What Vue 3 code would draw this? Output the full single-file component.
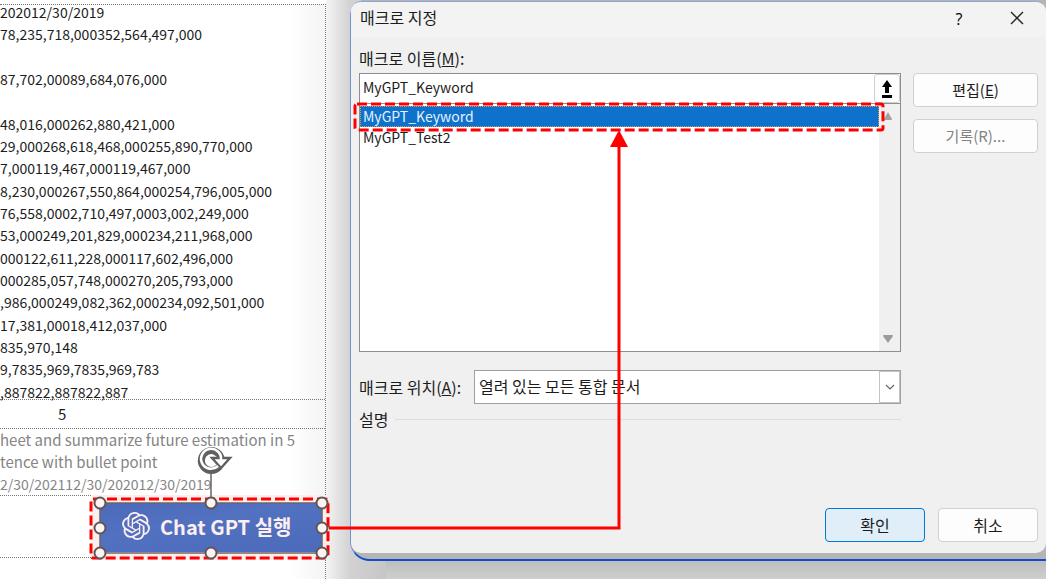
<script setup>
import { ref } from 'vue'

const figures = [
  '202012/30/2019',
  '78,235,718,000352,564,497,000',
  '',
  '87,702,00089,684,076,000',
  '',
  '48,016,000262,880,421,000',
  '29,000268,618,468,000255,890,770,000',
  '7,000119,467,000119,467,000',
  '8,230,000267,550,864,000254,796,005,000',
  '76,558,0002,710,497,0003,002,249,000',
  '53,000249,201,829,000234,211,968,000',
  '000122,611,228,000117,602,496,000',
  '000285,057,748,000270,205,793,000',
  ',986,000249,082,362,000234,092,501,000',
  '17,381,00018,412,037,000',
  '835,970,148',
  '9,7835,969,7835,969,783',
  ',887822,887822,887'
]
const macros = ['MyGPT_Keyword', 'MyGPT_Test2']
const selected = ref('MyGPT_Keyword')
const handles = [
  [100, 503], [211, 503], [322, 503],
  [100, 528], [322, 528],
  [100, 553], [211, 553], [322, 553]
]
</script>

<template>
  <div class="screen">
    <section class="sheet">
      <div class="cell figures">
        <div class="lines">
          <div v-for="(line, i) in figures" :key="i">{{ line }}</div>
        </div>
      </div>
      <div class="cell count">5</div>
      <div class="cell prompt">
        <div>heet and summarize future estimation in 5</div>
        <div>tence with bullet point</div>
        <div class="dates">2/30/202112/30/202012/30/2019</div>
      </div>
      <div class="cell launch">
        <button class="chat" type="button">
          <svg width="28" height="28" viewBox="0 0 24 24" aria-hidden="true">
            <path fill="#fdeef0" d="M22.2819 9.8211a5.9847 5.9847 0 0 0-.5157-4.9108 6.0462 6.0462 0 0 0-6.5098-2.9A6.0651 6.0651 0 0 0 4.9807 4.1818a5.9847 5.9847 0 0 0-3.9977 2.9 6.0462 6.0462 0 0 0 .7427 7.0966 5.98 5.98 0 0 0 .511 4.9107 6.051 6.051 0 0 0 6.5146 2.9001A5.9847 5.9847 0 0 0 13.2599 24a6.0557 6.0557 0 0 0 5.7718-4.2058 5.9894 5.9894 0 0 0 3.9977-2.9001 6.0557 6.0557 0 0 0-.7475-7.0729zm-9.022 12.6081a4.4755 4.4755 0 0 1-2.8764-1.0408l.1419-.0804 4.7783-2.7582a.7948.7948 0 0 0 .3927-.6813v-6.7369l2.02 1.1686a.071.071 0 0 1 .038.052v5.5826a4.504 4.504 0 0 1-4.4945 4.4944zm-9.6607-4.1254a4.4708 4.4708 0 0 1-.5346-3.0137l.142.0852 4.783 2.7582a.7712.7712 0 0 0 .7806 0l5.8428-3.3685v2.3324a.0804.0804 0 0 1-.0332.0615L9.74 19.9502a4.4992 4.4992 0 0 1-6.1408-1.6464zM2.3408 7.8956a4.485 4.485 0 0 1 2.3655-1.9728V11.6a.7664.7664 0 0 0 .3879.6765l5.8144 3.3543-2.0201 1.1685a.0757.0757 0 0 1-.071 0l-4.8303-2.7865A4.504 4.504 0 0 1 2.3408 7.872zm16.5963 3.8558L13.1038 8.364 15.1192 7.2a.0757.0757 0 0 1 .071 0l4.8303 2.7913a4.4944 4.4944 0 0 1-.6765 8.1042v-5.6772a.79.79 0 0 0-.407-.667zm2.0107-3.0231l-.142-.0852-4.7735-2.7818a.7759.7759 0 0 0-.7854 0L9.409 9.2297V6.8974a.0662.0662 0 0 1 .0284-.0615l4.8303-2.7866a4.4992 4.4992 0 0 1 6.6802 4.66zM8.3065 12.863l-2.02-1.1638a.0804.0804 0 0 1-.038-.0567V6.0742a4.4992 4.4992 0 0 1 7.3757-3.4537l-.142.0805L8.704 5.459a.7948.7948 0 0 0-.3927.6813zm1.0976-2.3654l2.602-1.4998 2.6069 1.4998v2.9994l-2.5974 1.4997-2.6067-1.4997Z" />
          </svg>
          <span>Chat GPT 실행</span>
        </button>
      </div>
    </section>

    <div class="backdrop">
      <div class="host">
        <form class="dialog" @submit.prevent>
          <header class="titlebar">
            <span class="title">매크로 지정</span>
            <button type="button" class="caption" aria-label="도움말">?</button>
            <button type="button" class="caption" aria-label="닫기">
              <svg width="14" height="14" viewBox="0 0 14 14"><path d="M1 1 13 13M13 1 1 13" stroke="#222" stroke-width="1.4" /></svg>
            </button>
          </header>

          <div class="body">
            <label class="name-label" for="macro-name">매크로 이름(<u>M</u>):</label>
            <div class="columns">
              <div class="fields">
                <div class="picker">
                  <div class="name-row">
                    <input id="macro-name" v-model="selected" type="text" spellcheck="false" />
                    <button type="button" class="collapse" aria-label="접기">
                      <svg width="12" height="20" viewBox="0 0 12 20"><path d="M6 1 11 8H8V14H4V8H1ZM1 16H11V19H1Z" fill="#000" /></svg>
                    </button>
                  </div>
                  <div class="list-row">
                    <select v-model="selected" size="3" aria-label="매크로 목록">
                      <option v-for="m in macros" :key="m" :value="m">{{ m }}</option>
                    </select>
                    <div class="track">
                      <svg width="10" height="8" viewBox="0 0 10 8"><path d="M5 0 9 7Q9 8 8 8H2Q1 8 1 7Z" fill="#a3a3a3" /></svg>
                      <svg width="10" height="8" viewBox="0 0 10 8"><path d="M5 8 0 1Q0 0 1 0H9Q10 0 10 1Z" fill="#9b9b9b" /></svg>
                    </div>
                  </div>
                </div>
                <div class="place">
                  <label for="macro-place">매크로 위치(<u>A</u>):</label>
                  <div class="combo">
                    <select id="macro-place"><option>열려 있는 모든 통합 문서</option></select>
                    <span class="drop"><svg width="10" height="6" viewBox="0 0 10 6"><path d="M1 1 5 5 9 1" fill="none" stroke="#666" stroke-width="1.2" /></svg></span>
                  </div>
                </div>
                <div class="desc"><span>설명</span><i></i></div>
              </div>
              <div class="side">
                <button type="button">편집(<u>E</u>)</button>
                <button type="button" disabled>기록(R)...</button>
              </div>
            </div>
            <footer class="actions">
              <button type="submit" class="ok">확인</button>
              <button type="button">취소</button>
            </footer>
          </div>
        </form>
      </div>
    </div>

    <svg class="marks" width="1046" height="579" viewBox="0 0 1046 579" aria-hidden="true">
      <path d="M211 471V503M100 503H322V553H100Z" fill="none" stroke="#6b6666" stroke-width="1.5" />
      <g fill="none">
        <path d="M219 467A10 10 0 1 1 221 458" stroke="#606060" stroke-width="7" />
        <path d="M212 458H230L221 468Z" fill="#fff" stroke="#606060" stroke-width="2.4" />
        <path d="M218 466A10 10 0 1 1 221 460" stroke="#fff" stroke-width="2.6" />
      </g>
      <g fill="none" stroke="#fe0000" stroke-width="3">
        <rect x="355" y="104" width="528" height="26" rx="2" stroke-dasharray="10 4" />
        <rect x="91" y="499" width="237" height="59" rx="2" stroke-dasharray="10 4" />
        <path d="M329 528H619V144" />
        <path d="M619 130 628 147H610Z" fill="#fe0000" stroke="none" />
      </g>
      <circle v-for="(h, i) in handles" :key="i" :cx="h[0]" :cy="h[1]" r="5.5" fill="#fdf3f3" stroke="#5f5654" stroke-width="2" />
    </svg>
  </div>
</template>

<style>
body { margin: 0; overflow: hidden; }
</style>

<style scoped>
* { box-sizing: border-box; }
.screen {
  position: relative;
  display: flex;
  min-height: 100vh;
  background: #fff;
  color: #1c1c1c;
  font: 14px/22px "Noto Sans CJK KR", sans-serif;
}
.sheet {
  flex: 0 0 326px;
  margin-top: 4px;
  border-top: 1px dotted #777;
  border-right: 1px dotted #777;
  white-space: nowrap;
  background: linear-gradient(90deg, #fff 290px, #f4f4f4);
}
.cell { border-bottom: 1px dotted #777; }
.figures { display: flex; align-items: center; height: 395px; }
.lines {
  display: grid;
  flex: none;
  grid-template-rows: repeat(18, 1fr);
  height: 402px;
}
.count { height: 29px; padding-left: 58px; font-size: 15px; line-height: 27px; }
.prompt { height: 67px; color: #858585; font-size: 15px; }
.dates { font-size: 14px; }
.launch {
  display: flex;
  justify-content: flex-end;
  height: 62px;
  padding: 7px 3px 5px 0;
}
.chat {
  display: flex;
  align-items: center;
  gap: 10px;
  width: 222px;
  padding: 0 0 3px 22px;
  border: 0;
  background: linear-gradient(170deg, #4b6aba, #5271c1 40%, #4b6aba);
  box-shadow: 0 0 0 8px #fdeeee;
  color: #fdeef0;
  font: bold 20px "Noto Sans CJK KR", sans-serif;
}
.backdrop {
  flex: 1;
  min-width: 0;
  padding: 0 0 18px 24px;
  background:
    linear-gradient(#bdbdbd, #cfcfcf) right bottom / calc(100% - 60px) 18px no-repeat,
    linear-gradient(90deg, #f4f4f4, #d2d2d2 24px, #c6c6c6 60px);
}
.host {
  padding: 1px 0 6px;
  border-bottom: 2px solid #0a50c8;
  border-left: 1px solid #6f94d4;
  border-radius: 16px 0 0 20px;
  background: #b5b5b5;
}
.dialog {
  display: flex;
  flex-direction: column;
  min-height: 552px;
  overflow: hidden;
  border-top: 1px solid #8ea6d2;
  border-radius: 10px;
  background: #f0f0f0;
}
.titlebar {
  display: flex;
  align-items: center;
  height: 35px;
  padding: 0 12px 2px 9px;
  background: #f3f3f3;
}
.title { flex: 1; font-size: 16px; line-height: 18px; padding-bottom: 3px; }
.caption {
  width: 34px;
  margin-left: 24px;
  padding: 0;
  border: 0;
  background: none;
  font: 16px "Open Sans", sans-serif;
}
.body {
  display: flex;
  flex: 1;
  flex-direction: column;
  padding: 10px 8px 11px;
  font-size: 16px;
}
.name-label { margin-bottom: 4px; }
.columns { display: flex; gap: 12px; }
.fields { flex: 1; min-width: 0; }
.picker { border: 1px solid #8b8e94; background: #fff; font-size: 14px; }
.name-row { display: flex; height: 30px; border-bottom: 1px solid #8b8e94; }
input {
  flex: 1;
  min-width: 0;
  padding: 0 3px 3px;
  border: 0;
  outline: 0;
  background: none;
  color: inherit;
  font: inherit;
}
.collapse {
  display: grid;
  place-items: center;
  width: 26px;
  padding: 0;
  border: 1px solid #d0d0d0;
  border-radius: 3px;
  background: #fdfdfd;
}
.list-row { display: flex; height: 247px; }
.list-row select {
  flex: 1;
  min-width: 0;
  padding: 2px 0 0;
  border: 0;
  outline: 0;
  border-radius: 0;
  background: #fff;
  color: inherit;
  font: inherit;
  overflow: hidden;
}
.list-row option { height: 21px; min-height: 21px; padding: 0 3px; line-height: 21px; }
.list-row option:checked {
  background: #0e72cc;
  color: #e6f1fa;
  outline: 1px dotted #e8914c;
  outline-offset: -1px;
}
.track {
  display: flex;
  flex-direction: column;
  align-items: center;
  justify-content: space-between;
  width: 21px;
  padding: 8px 3px 8px 0;
  background: #f0f0f0;
}
.place {
  display: flex;
  align-items: center;
  gap: 10px;
  margin-top: 18px;
}
.combo { display: flex; flex: 1; height: 34px; border: 1px solid #a0a0a0; background: #fff; }
.place label { width: 105px; white-space: nowrap; }
.combo select {
  flex: 1;
  min-width: 0;
  padding: 0 4px 2px;
  border: 0;
  appearance: none;
  background: none;
  color: #1c1c1c;
  font: inherit;
}
.drop { display: grid; place-items: center; width: 21px; border: 1px solid #c4c4c4; pointer-events: none; }
.desc { display: flex; align-items: center; gap: 7px; margin-top: 4px; }
.desc i { flex: 1; border-top: 1px solid #dcdcdc; }
.side { display: flex; flex-direction: column; gap: 12px; width: 125px; }
.side button,
.actions button {
  height: 34px;
  padding: 0 0 1px;
  border: 1px solid #d0d0d0;
  border-radius: 4px;
  background: #fdfdfd;
  color: #1c1c1c;
  font: inherit;
}
.side button { font-size: 15px; }
.side button:disabled { color: #838383; }
.actions { display: flex; justify-content: flex-end; gap: 13px; margin-top: auto; }
.actions button { width: 100px; }
.actions .ok { border-color: #0078d4; background: #e0eef9; }
.marks { position: absolute; top: 0; left: 0; pointer-events: none; }
</style>
